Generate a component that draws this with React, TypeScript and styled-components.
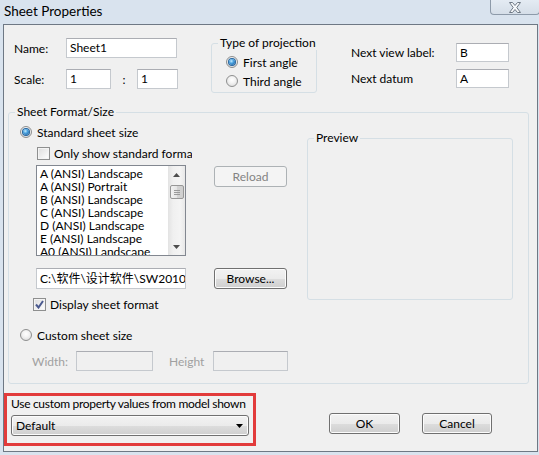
import React from 'react';
import styled, { createGlobalStyle } from 'styled-components';

const GlobalStyle = createGlobalStyle`
  html, body {
    margin: 0;
    padding: 0;
    background: #d9e3ee;
  }
  body {
    font-family: Lato, 'Noto Sans', 'Noto Sans CJK SC', sans-serif;
    font-size: 12px;
    color: #000;
  }
  * {
    box-sizing: border-box;
  }
`;

const Window = styled.div`
  width: 539px;
  height: 455px;
  background: #d9e3ee;
  display: flex;
  flex-direction: column;
  padding: 0 1px 3px 3px;
  overflow: hidden;
`;

const TitleBar = styled.div`
  height: 24px;
  display: flex;
  justify-content: space-between;
  align-items: flex-start;
  flex-shrink: 0;
`;

const Title = styled.span`
  margin: 1px 0 0 1px;
  font-size: 13.5px;
  line-height: 20px;
  color: #000;
`;

const CloseButton = styled.div`
  width: 50px;
  height: 15px;
  margin-right: -2px;
  border: 1px solid #8d9aa9;
  border-top: none;
  border-radius: 0 0 4px 4px;
  background: linear-gradient(#e4ebf3, #d5dee8);
  display: flex;
  align-items: center;
  justify-content: center;
`;

const Client = styled.div`
  flex: 1;
  border: 1px solid #6e7884;
  background: #f0f0f0;
  display: flex;
  flex-direction: column;
`;

const TopRow = styled.div`
  display: flex;
  align-items: flex-start;
  height: 67px;
  margin-top: 13px;
  padding-left: 10px;
`;

const FieldBlock = styled.div<{ $left?: number; $top?: number; $gap: number }>`
  display: flex;
  flex-direction: column;
  gap: ${(p) => p.$gap}px;
  margin-left: ${(p) => p.$left ?? 0}px;
  margin-top: ${(p) => p.$top ?? 0}px;
`;

const FormRow = styled.div`
  display: flex;
  align-items: center;
`;

const Label = styled.span<{ $w: number; $muted?: boolean; $left?: number }>`
  width: ${(p) => p.$w}px;
  margin-left: ${(p) => p.$left ?? 0}px;
  flex-shrink: 0;
  white-space: nowrap;
  color: ${(p) => (p.$muted ? '#a0a0a0' : '#000')};
`;

const TextBox = styled.div<{ $w: number; $h: number; $disabled?: boolean }>`
  width: ${(p) => p.$w}px;
  height: ${(p) => p.$h}px;
  flex-shrink: 0;
  border: 1px solid #c5c9ce;
  border-top-color: #abadb3;
  background: ${(p) => (p.$disabled ? '#f0f0f0' : '#fff')};
  padding-left: 3px;
  line-height: ${(p) => p.$h - 2}px;
  white-space: nowrap;
  overflow: hidden;
`;

const Colon = styled.span`
  width: 26px;
  text-align: center;
`;

const Group = styled.fieldset<{ $w: number; $h?: number; $left?: number; $top?: number }>`
  margin: 0;
  margin-left: ${(p) => p.$left ?? 0}px;
  margin-top: ${(p) => p.$top ?? 0}px;
  padding: 0;
  min-width: 0;
  width: ${(p) => p.$w}px;
  height: ${(p) => (p.$h ? `${p.$h}px` : 'auto')};
  border: 1px solid #d5dfe5;
  border-radius: 3px;
  flex-shrink: 0;
`;

const Legend = styled.legend`
  margin-left: 6px;
  padding: 0 2px;
  font-size: 12px;
  line-height: 14px;
  white-space: nowrap;
`;

const GroupBody = styled.div<{ $pad: string; $gap?: number }>`
  padding: ${(p) => p.$pad};
  display: flex;
  flex-direction: column;
  gap: ${(p) => p.$gap ?? 0}px;
`;

const OptionRow = styled.div<{ $indent?: number; $top?: number }>`
  display: flex;
  align-items: center;
  height: 16px;
  margin-left: ${(p) => p.$indent ?? 0}px;
  margin-top: ${(p) => p.$top ?? 0}px;
  white-space: nowrap;
`;

const RadioCircle = styled.span<{ $checked?: boolean }>`
  width: 12px;
  height: 12px;
  border-radius: 50%;
  border: 1px solid #8e8f8f;
  background: radial-gradient(circle at 50% 40%, #ffffff 0, #f3f3f3 40%, #d4d4d4 100%);
  display: flex;
  align-items: center;
  justify-content: center;
  margin-right: 5px;
  flex-shrink: 0;

  &::after {
    content: '';
    display: ${(p) => (p.$checked ? 'block' : 'none')};
    width: 6px;
    height: 6px;
    border-radius: 50%;
    background: radial-gradient(circle at 40% 35%, #c4ecff 0, #4aa2e0 40%, #11508f 100%);
    box-shadow: 0 0 0 1px #25659f;
  }
`;

const CheckBoxBox = styled.span`
  width: 13px;
  height: 13px;
  border: 1px solid #8e8f8f;
  background: linear-gradient(135deg, #dcdcdc, #ffffff);
  box-shadow: inset 0 0 0 1px #f4f4f4;
  display: flex;
  align-items: center;
  justify-content: center;
  margin-right: 4px;
  flex-shrink: 0;
`;

const ClipText = styled.span<{ $w?: number }>`
  display: inline-block;
  overflow: hidden;
  white-space: nowrap;
  width: ${(p) => (p.$w ? `${p.$w}px` : 'auto')};
`;

const SheetGroupRow = styled.div`
  display: flex;
  align-items: flex-start;
`;

const LeftColumn = styled.div`
  width: 287px;
  display: flex;
  flex-direction: column;
`;

const PairRow = styled.div<{ $top: number }>`
  display: flex;
  align-items: flex-start;
  gap: 28px;
  margin-left: 16px;
  margin-top: ${(p) => p.$top}px;
`;

const ListBox = styled.div`
  width: 150px;
  height: 91px;
  border: 1px solid #828790;
  background: #fff;
  display: flex;
  overflow: hidden;
`;

const ListItems = styled.div`
  flex: 1;
  padding: 1px 0 0 3px;
  overflow: hidden;
  white-space: nowrap;
  line-height: 13px;
`;

const ScrollBar = styled.div`
  width: 17px;
  display: flex;
  flex-direction: column;
  align-items: center;
  background: linear-gradient(90deg, #e3e3e3, #f0f0f0 30%, #f4f4f4 70%, #e8e8e8);
`;

const ScrollArrow = styled.div`
  height: 17px;
  width: 17px;
  display: flex;
  align-items: center;
  justify-content: center;
  flex-shrink: 0;
`;

const ScrollThumb = styled.div`
  width: 14px;
  height: 14px;
  margin-top: 2px;
  border: 1px solid #979797;
  border-radius: 2px;
  background: linear-gradient(90deg, #f2f2f2, #e4e4e4 50%, #d3d3d3 51%, #cfcfcf);
  display: flex;
  align-items: center;
  justify-content: center;
`;

const ScrollSpacer = styled.div`
  flex: 1;
`;

const PushButton = styled.div<{ $w: number; $disabled?: boolean; $top?: number }>`
  width: ${(p) => p.$w}px;
  height: 21px;
  margin-top: ${(p) => p.$top ?? 0}px;
  flex-shrink: 0;
  border: 1px solid ${(p) => (p.$disabled ? '#adb2b5' : '#707070')};
  border-radius: 3px;
  background: ${(p) =>
    p.$disabled
      ? '#f4f4f4'
      : 'linear-gradient(#f2f2f2 0%, #ebebeb 50%, #dddddd 51%, #cfcfcf 100%)'};
  box-shadow: ${(p) => (p.$disabled ? 'none' : 'inset 0 0 0 1px #fcfcfc')};
  color: ${(p) => (p.$disabled ? '#838383' : '#000')};
  display: flex;
  align-items: center;
  justify-content: center;
  line-height: 1;
`;

const SizeRow = styled.div`
  display: flex;
  align-items: center;
  margin-left: 12px;
  margin-top: 8px;
`;

const BottomRow = styled.div`
  display: flex;
  align-items: flex-start;
  margin-top: 9px;
`;

const HighlightBox = styled.div`
  width: 252px;
  height: 53px;
  border: 3px solid #e23b3b;
  padding: 0 4px 0 4px;
  display: flex;
  flex-direction: column;
`;

const HighlightCaption = styled.div`
  line-height: 16px;
  letter-spacing: -0.3px;
  white-space: nowrap;
`;

const ComboBox = styled.div`
  margin-top: 3px;
  height: 21px;
  border: 1px solid #707070;
  border-radius: 3px;
  background: linear-gradient(#f2f2f2 0%, #ebebeb 50%, #dddddd 51%, #cfcfcf 100%);
  box-shadow: inset 0 0 0 1px #fcfcfc;
  display: flex;
  align-items: center;
  justify-content: space-between;
  padding: 0 5px 0 4px;
`;

const ButtonBar = styled.div`
  display: flex;
  gap: 22px;
  margin-left: 73px;
  margin-top: 20px;
`;

const sheetSizes = [
  'A (ANSI) Landscape',
  'A (ANSI) Portrait',
  'B (ANSI) Landscape',
  'C (ANSI) Landscape',
  'D (ANSI) Landscape',
  'E (ANSI) Landscape',
  'A0 (ANSI) Landscape',
  'A1 (ANSI) Landscape',
];

const Radio = ({ checked, children, indent, top }: { checked?: boolean; children: React.ReactNode; indent?: number; top?: number }) => (
  <OptionRow $indent={indent} $top={top}>
    <RadioCircle $checked={checked} />
    {children}
  </OptionRow>
);

const CheckBox = ({ checked, children, indent, top, clip }: { checked?: boolean; children: React.ReactNode; indent?: number; top?: number; clip?: number }) => (
  <OptionRow $indent={indent} $top={top}>
    <CheckBoxBox>
      {checked && (
        <svg width="9" height="9" viewBox="0 0 9 9">
          <path d="M1 4.5 L3.5 7.5 L8 1" fill="none" stroke="#4b5a8f" strokeWidth="2" />
        </svg>
      )}
    </CheckBoxBox>
    <ClipText $w={clip}>{children}</ClipText>
  </OptionRow>
);

const Triangle = ({ down, color = '#4d4d4d' }: { down?: boolean; color?: string }) => (
  <svg width="7" height="4" viewBox="0 0 7 4">
    <path d={down ? 'M0 0 H7 L3.5 4 Z' : 'M0 4 H7 L3.5 0 Z'} fill={color} />
  </svg>
);

const App = () => (
  <>
    <GlobalStyle />
    <Window>
      <TitleBar>
        <Title>Sheet Properties</Title>
        <CloseButton>
          <svg width="14" height="11" viewBox="0 0 14 11">
            <path
              d="M1.5 0.5 H4.5 L7 3.5 L9.5 0.5 H12.5 L8.8 5.5 L12.5 10.5 H9.5 L7 7.5 L4.5 10.5 H1.5 L5.2 5.5 Z"
              fill="#f7f9fb"
              stroke="#6f7985"
              strokeWidth="1"
              strokeLinejoin="round"
            />
          </svg>
        </CloseButton>
      </TitleBar>
      <Client>
        <TopRow>
          <FieldBlock $gap={11}>
            <FormRow>
              <Label $w={52}>Name:</Label>
              <TextBox $w={111} $h={20}>Sheet1</TextBox>
            </FormRow>
            <FormRow>
              <Label $w={52}>Scale:</Label>
              <TextBox $w={45} $h={20}>1</TextBox>
              <Colon>:</Colon>
              <TextBox $w={41} $h={20}>1</TextBox>
            </FormRow>
          </FieldBlock>
          <Group $w={106} $left={33} $top={-2}>
            <Legend>Type of projection</Legend>
            <GroupBody $pad="4px 0 3px 14px" $gap={3}>
              <Radio checked>First angle</Radio>
              <Radio>Third angle</Radio>
            </GroupBody>
          </Group>
          <FieldBlock $gap={7} $left={34} $top={5}>
            <FormRow>
              <Label $w={105}>Next view label:</Label>
              <TextBox $w={53} $h={19}>B</TextBox>
            </FormRow>
            <FormRow>
              <Label $w={105}>Next datum</Label>
              <TextBox $w={53} $h={19}>A</TextBox>
            </FormRow>
          </FieldBlock>
        </TopRow>

        <Group $w={521} $left={4}>
          <Legend>Sheet Format/Size</Legend>
          <GroupBody $pad="5px 0 12px 11px">
            <SheetGroupRow>
              <LeftColumn>
                <Radio checked>Standard sheet size</Radio>
                <CheckBox indent={17} top={5} clip={138}>Only show standard format</CheckBox>
                <PairRow $top={4}>
                  <ListBox>
                    <ListItems>
                      {sheetSizes.map((s) => (
                        <div key={s}>{s}</div>
                      ))}
                    </ListItems>
                    <ScrollBar>
                      <ScrollArrow>
                        <Triangle />
                      </ScrollArrow>
                      <ScrollThumb>
                        <svg width="6" height="5" viewBox="0 0 6 5">
                          <path d="M0 0.5 H6 M0 2.5 H6 M0 4.5 H6" stroke="#9a9a9a" strokeWidth="1" />
                        </svg>
                      </ScrollThumb>
                      <ScrollSpacer />
                      <ScrollArrow>
                        <Triangle down />
                      </ScrollArrow>
                    </ScrollBar>
                  </ListBox>
                  <PushButton $w={73} $disabled $top={1}>Reload</PushButton>
                </PairRow>
                <PairRow $top={12}>
                  <TextBox $w={150} $h={21}>C:\软件\设计软件\SW2010\SolidWorks\lang\chinese-simplified\sheetformat</TextBox>
                  <PushButton $w={73}>Browse...</PushButton>
                </PairRow>
                <CheckBox checked indent={13} top={7}>Display sheet format</CheckBox>
                <Radio top={15}>Custom sheet size</Radio>
                <SizeRow>
                  <Label $w={44} $muted>Width:</Label>
                  <TextBox $w={77} $h={20} $disabled />
                  <Label $w={44} $muted $left={16}>Height</Label>
                  <TextBox $w={75} $h={20} $disabled />
                </SizeRow>
              </LeftColumn>
              <Group $w={206} $h={169} $top={7}>
                <Legend>Preview</Legend>
              </Group>
            </SheetGroupRow>
          </GroupBody>
        </Group>

        <BottomRow>
          <HighlightBox>
            <HighlightCaption>Use custom property values from model shown</HighlightCaption>
            <ComboBox>
              <span>Default</span>
              <Triangle down color="#000" />
            </ComboBox>
          </HighlightBox>
          <ButtonBar>
            <PushButton $w={71}>OK</PushButton>
            <PushButton $w={70}>Cancel</PushButton>
          </ButtonBar>
        </BottomRow>
      </Client>
    </Window>
  </>
);

export default App;
